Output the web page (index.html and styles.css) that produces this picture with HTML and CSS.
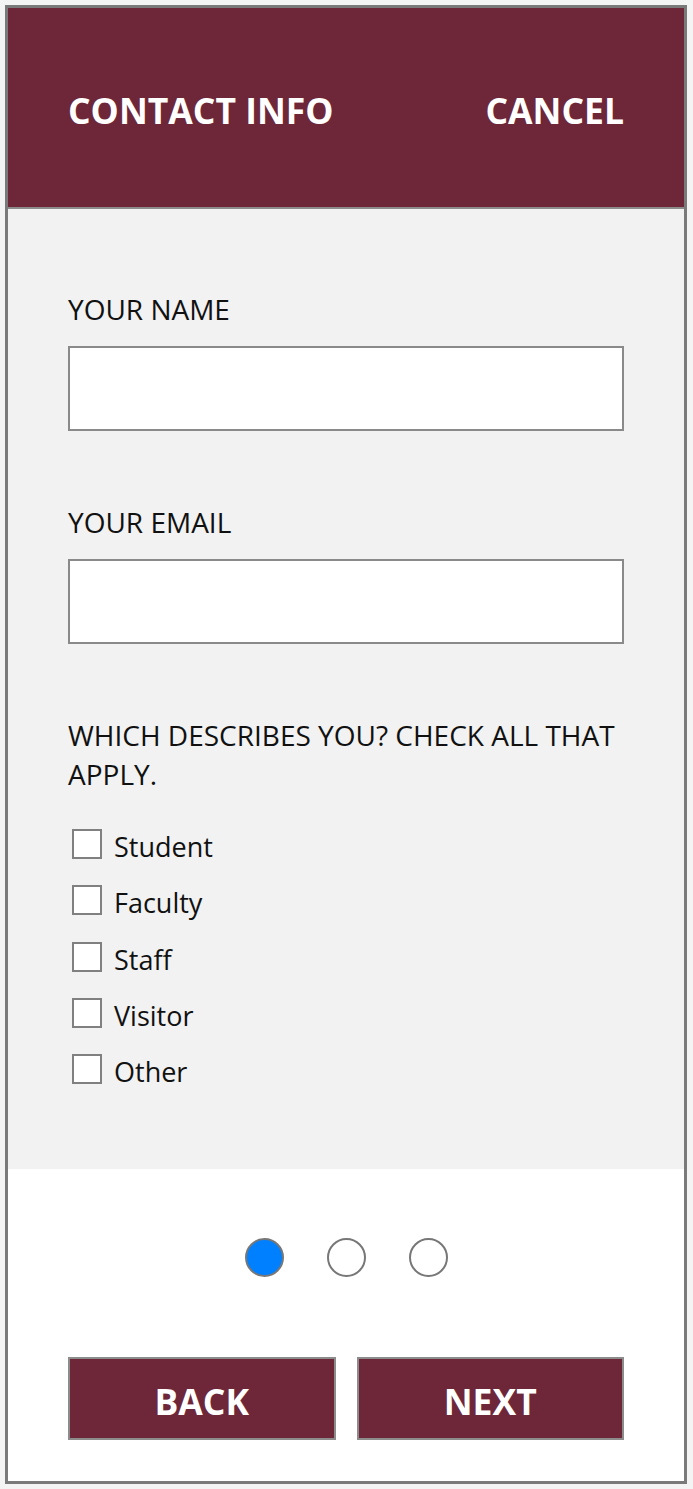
FILE: index.html
```html
<!DOCTYPE html>
<html lang="en">
<head>
<meta charset="utf-8">
<title>Contact Info</title>
<link rel="stylesheet" href="styles.css">
</head>
<body>
<div class="frame">
  <header class="topbar">
    <h1 class="title">CONTACT INFO</h1>
    <span class="cancel">CANCEL</span>
  </header>
  <main class="form">
    <div class="field">
      <div class="label">YOUR NAME</div>
      <div class="input"></div>
    </div>
    <div class="field">
      <div class="label">YOUR EMAIL</div>
      <div class="input"></div>
    </div>
    <div class="label question">WHICH DESCRIBES YOU? CHECK ALL THAT APPLY.</div>
    <ul class="checks">
      <li class="check"><span class="box"></span><span class="check-text">Student</span></li>
      <li class="check"><span class="box"></span><span class="check-text">Faculty</span></li>
      <li class="check"><span class="box"></span><span class="check-text">Staff</span></li>
      <li class="check"><span class="box"></span><span class="check-text">Visitor</span></li>
      <li class="check"><span class="box"></span><span class="check-text">Other</span></li>
    </ul>
  </main>
  <footer class="footer">
    <div class="dots">
      <span class="dot active"></span>
      <span class="dot"></span>
      <span class="dot"></span>
    </div>
    <div class="buttons">
      <div class="btn">BACK</div>
      <div class="btn">NEXT</div>
    </div>
  </footer>
</div>
</body>
</html>
```
FILE: styles.css
```css
html, body {
  margin: 0;
  padding: 0;
}
body {
  background: #f4f4f4;
  font-family: "Open Sans", "Noto Sans", "Liberation Sans", sans-serif;
  color: #111;
}
.frame {
  box-sizing: border-box;
  margin: 5px 0 0 5px;
  width: 682px;
  height: 1479px;
  border: 3px solid #7a7a7a;
  background: #fff;
  display: flex;
  flex-direction: column;
}
.topbar {
  box-sizing: border-box;
  height: 201px;
  flex: none;
  background: #6e2639;
  border-bottom: 2px solid #8c8c8c;
  display: flex;
  align-items: center;
  justify-content: space-between;
  padding: 4px 60px 0 60px;
  color: #fff;
}
.title, .cancel {
  margin: 0;
  font-size: 35.5px;
  font-weight: 700;
  line-height: 44px;
  letter-spacing: 0;
}
.form {
  box-sizing: border-box;
  height: 960px;
  flex: none;
  background: #f2f2f2;
  padding: 81px 60px 0 60px;
}
.field {
  margin-bottom: 72px;
}
.label {
  font-size: 28px;
  line-height: 39px;
  color: #111;
}
.input {
  box-sizing: border-box;
  margin-top: 17px;
  height: 85px;
  background: #fff;
  border: 2px solid #8a8a8a;
}
.question {
  margin-top: 1px;
  margin-right: -4px;
}
.checks {
  list-style: none;
  margin: 35px 0 0 4px;
  padding: 0;
  display: flex;
  flex-direction: column;
  gap: 26.25px;
}
.check {
  display: flex;
  align-items: center;
  height: 30px;
  gap: 12px;
}
.box {
  box-sizing: border-box;
  width: 30px;
  height: 30px;
  flex: none;
  background: #fff;
  border: 2px solid #808080;
}
.check-text {
  font-size: 27px;
  line-height: 30px;
  position: relative;
  top: 3px;
}
.footer {
  flex: 1;
  background: #fff;
  padding: 69px 60px 0 60px;
}
.dots {
  display: flex;
  justify-content: center;
  gap: 43px;
}
.dot {
  box-sizing: border-box;
  width: 39px;
  height: 39px;
  border-radius: 50%;
  border: 2px solid #777;
  background: #fff;
}
.dot.active {
  background: #0080ff;
}
.buttons {
  margin-top: 80px;
  display: flex;
  gap: 21px;
}
.btn {
  box-sizing: border-box;
  flex: 1;
  height: 83px;
  padding-top: 4px;
  background: #6e2639;
  border: 2px solid #8c8c8c;
  color: #fff;
  font-size: 35.5px;
  font-weight: 700;
  display: flex;
  align-items: center;
  justify-content: center;
}
```
